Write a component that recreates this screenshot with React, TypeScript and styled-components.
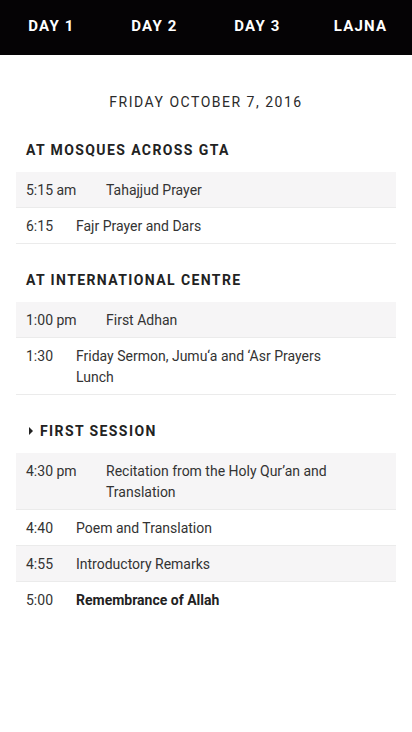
import React from "react";
import styled, { createGlobalStyle } from "styled-components";

const Global = createGlobalStyle`
  html, body { margin: 0; padding: 0; background: #fff; }
  body { font-family: Roboto, "Noto Sans", Arial, sans-serif; color: #333; }
`;

const Nav = styled.nav`
  display: grid;
  grid-template-columns: repeat(4, 1fr);
  height: 55px;
  background: #050305;
  align-items: center;
`;

const Tab = styled.a`
  text-align: center;
  color: #fff;
  font-weight: 700;
  font-size: 15px;
  letter-spacing: 1.2px;
  text-decoration: none;
  padding-bottom: 3px;
`;

const Main = styled.main`
  padding: 37px 16px 0;
`;

const DateTitle = styled.h2`
  margin: 0 0 28px;
  text-align: center;
  font-weight: 400;
  font-size: 14px;
  line-height: 20px;
  letter-spacing: 1.5px;
  color: #2a2a2a;
`;

const SectionTitle = styled.h3`
  display: flex;
  align-items: center;
  gap: 7px;
  margin: 0 0 12px;
  padding-left: 10px;
  font-weight: 700;
  font-size: 14px;
  line-height: 20px;
  letter-spacing: 1.4px;
  color: #222;
`;

const Caret = styled.span`
  width: 0;
  height: 0;
  border-top: 4px solid transparent;
  border-bottom: 4px solid transparent;
  border-left: 4px solid #222;
  margin-left: 3px;
`;

const Section = styled.section`
  margin-bottom: 26px;
`;

const Row = styled.div<{ $shade: boolean; $last?: boolean }>`
  display: flex;
  padding: 8px 10px 6px;
  font-size: 14px;
  line-height: 21px;
  background: ${(p) => (p.$shade ? "#f6f5f6" : "#fff")};
  border-bottom: ${(p) => (p.$last ? "none" : "1px solid #ebebeb")};
  color: #333;
`;

const Time = styled.div<{ $wide: boolean }>`
  flex: 0 0 ${(p) => (p.$wide ? "80px" : "50px")};
`;

const Desc = styled.div<{ $bold?: boolean }>`
  flex: 1;
  font-weight: ${(p) => (p.$bold ? 700 : 400)};
  color: ${(p) => (p.$bold ? "#222" : "#333")};
`;

type Item = { time: string; lines: string[]; bold?: boolean };
type Sec = { title: string; caret?: boolean; items: Item[]; last?: boolean };

const sections: Sec[] = [
  {
    title: "AT MOSQUES ACROSS GTA",
    items: [
      { time: "5:15 am", lines: ["Tahajjud Prayer"] },
      { time: "6:15", lines: ["Fajr Prayer and Dars"] },
    ],
  },
  {
    title: "AT INTERNATIONAL CENTRE",
    items: [
      { time: "1:00 pm", lines: ["First Adhan"] },
      { time: "1:30", lines: ["Friday Sermon, Jumu\u2018a and \u2018Asr Prayers", "Lunch"] },
    ],
  },
  {
    title: "FIRST SESSION",
    caret: true,
    last: true,
    items: [
      { time: "4:30 pm", lines: ["Recitation from the Holy Qur\u2019an and", "Translation"] },
      { time: "4:40", lines: ["Poem and Translation"] },
      { time: "4:55", lines: ["Introductory Remarks"] },
      { time: "5:00", lines: ["Remembrance of Allah"], bold: true },
    ],
  },
];

export default function App() {
  return (
    <>
      <Global />
      <Nav>
        {["DAY 1", "DAY 2", "DAY 3", "LAJNA"].map((t) => (
          <Tab key={t} href="#">
            {t}
          </Tab>
        ))}
      </Nav>
      <Main>
        <DateTitle>FRIDAY OCTOBER 7, 2016</DateTitle>
        {sections.map((s) => (
          <Section key={s.title}>
            <SectionTitle>
              {s.caret && <Caret />}
              {s.title}
            </SectionTitle>
            {s.items.map((it, i) => (
              <Row key={it.time} $shade={i % 2 === 0} $last={s.last && i === s.items.length - 1}>
                <Time $wide={/am|pm/.test(it.time)}>{it.time}</Time>
                <Desc $bold={it.bold}>
                  {it.lines.map((l, j) => (
                    <div key={j}>{l}</div>
                  ))}
                </Desc>
              </Row>
            ))}
          </Section>
        ))}
      </Main>
    </>
  );
}
